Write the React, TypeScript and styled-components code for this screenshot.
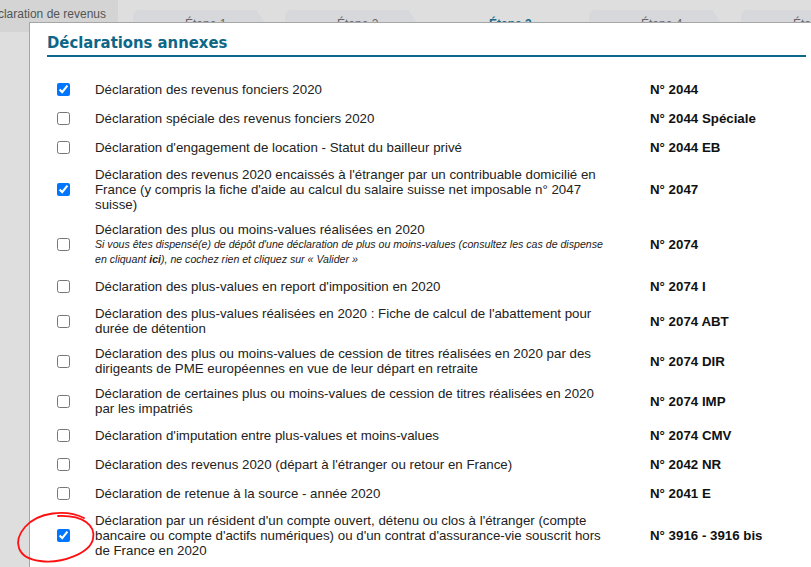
import React from "react";
import styled, { createGlobalStyle } from "styled-components";

const GlobalStyle = createGlobalStyle`
  html, body {
    margin: 0;
    padding: 0;
    background: #dedede;
  }
  body {
    font-family: "Liberation Sans", Arial, sans-serif;
  }
`;

const Page = styled.div`
  position: relative;
  width: 811px;
  height: 567px;
  overflow: hidden;
  background: #dedede;
`;

const TopBar = styled.div`
  display: flex;
  align-items: flex-start;
  height: 32px;
`;

const Crumb = styled.div`
  flex-shrink: 0;
  width: 106px;
  height: 28px;
  padding: 0 12px 4px 0;
  display: flex;
  justify-content: flex-end;
  align-items: center;
  overflow: hidden;
  white-space: nowrap;
  background: #d4d4d4;
  color: #555;
  font-size: 12px;
`;

const Tabs = styled.div`
  display: flex;
  flex-shrink: 0;
  gap: 12px;
  margin-left: 15px;
  padding-top: 10px;
`;

const Tab = styled.div<{ $active?: boolean }>`
  flex-shrink: 0;
  width: 140px;
  height: 26px;
  padding: 7px 0 0 52px;
  box-sizing: border-box;
  background: ${({ $active }) => ($active ? "#dedede" : "#d6d8db")};
  clip-path: polygon(0 0, 88% 0, 100% 100%, 0 100%);
  border-radius: 6px 0 0 0;
  color: ${({ $active }) => ($active ? "#1d6a8c" : "#666")};
  font-weight: ${({ $active }) => ($active ? "bold" : "normal")};
  font-size: 12px;
`;

const Modal = styled.div`
  position: absolute;
  left: 29px;
  top: 22px;
  width: 758px;
  height: 600px;
  padding: 0 18px;
  background: #fff;
  border: 1px solid #a6a6a6;
`;

const Title = styled.h2`
  margin: 10px 0 0 -1px;
  padding-bottom: 2px;
  border-bottom: 2px solid #0b6a8b;
  color: #0e6687;
  font-family: "DejaVu Sans Condensed", "Liberation Sans Narrow", sans-serif;
  font-size: 16.5px;
  line-height: 20px;
  font-weight: bold;
`;

const List = styled.div`
  margin-top: 18px;
`;

const Row = styled.label`
  display: grid;
  grid-template-columns: 47px 510px 1fr;
  align-items: center;
  padding: 5px 0;
  color: #222;
  font-size: 13.3px;
  line-height: 15px;
`;

const Box = styled.input`
  margin: 0 0 0 9px;
  width: 13px;
  height: 13px;
  accent-color: #0075ff;
`;

const Label = styled.div``;

const Note = styled.div`
  font-size: 10.6px;
  font-style: italic;
  line-height: 15px;
  b {
    font-weight: bold;
  }
`;

const Code = styled.div`
  padding-left: 45px;
  font-weight: bold;
  color: #111;
  line-height: 19px;
  white-space: nowrap;
`;

const Mark = styled.svg`
  position: absolute;
  left: 0;
  top: 500px;
  width: 110px;
  height: 67px;
  pointer-events: none;
`;

type Item = { checked: boolean; text: React.ReactNode; code: string; note?: React.ReactNode };

const items: Item[] = [
  { checked: true, text: "Déclaration des revenus fonciers 2020", code: "N° 2044" },
  { checked: false, text: "Déclaration spéciale des revenus fonciers 2020", code: "N° 2044 Spéciale" },
  { checked: false, text: "Déclaration d'engagement de location - Statut du bailleur privé", code: "N° 2044 EB" },
  {
    checked: true,
    text: "Déclaration des revenus 2020 encaissés à l'étranger par un contribuable domicilié en France (y compris la fiche d'aide au calcul du salaire suisse net imposable n° 2047 suisse)",
    code: "N° 2047",
  },
  {
    checked: false,
    text: "Déclaration des plus ou moins-values réalisées en 2020",
    note: (
      <>
        Si vous êtes dispensé(e) de dépôt d'une déclaration de plus ou moins-values (consultez les cas de dispense en
        cliquant <b>ici</b>), ne cochez rien et cliquez sur « Valider »
      </>
    ),
    code: "N° 2074",
  },
  { checked: false, text: "Déclaration des plus-values en report d'imposition en 2020", code: "N° 2074 I" },
  {
    checked: false,
    text: "Déclaration des plus-values réalisées en 2020 : Fiche de calcul de l'abattement pour durée de détention",
    code: "N° 2074 ABT",
  },
  {
    checked: false,
    text: "Déclaration des plus ou moins-values de cession de titres réalisées en 2020 par des dirigeants de PME européennes en vue de leur départ en retraite",
    code: "N° 2074 DIR",
  },
  {
    checked: false,
    text: "Déclaration de certaines plus ou moins-values de cession de titres réalisées en 2020 par les impatriés",
    code: "N° 2074 IMP",
  },
  { checked: false, text: "Déclaration d'imputation entre plus-values et moins-values", code: "N° 2074 CMV" },
  { checked: false, text: "Déclaration des revenus 2020 (départ à l'étranger ou retour en France)", code: "N° 2042 NR" },
  { checked: false, text: "Déclaration de retenue à la source - année 2020", code: "N° 2041 E" },
  {
    checked: true,
    text: "Déclaration par un résident d'un compte ouvert, détenu ou clos à l'étranger (compte bancaire ou compte d'actifs numériques) ou d'un contrat d'assurance-vie souscrit hors de France en 2020",
    code: "N° 3916 - 3916 bis",
  },
];

const steps = ["Étape 1", "Étape 2", "Étape 3", "Étape 4", "Étape 5"];

export default function App() {
  return (
    <Page>
      <GlobalStyle />
      <TopBar>
        <Crumb>Déclaration de revenus</Crumb>
        <Tabs>
          {steps.map((s, i) => (
            <Tab key={s} $active={i === 2}>
              {s}
            </Tab>
          ))}
        </Tabs>
      </TopBar>
      <Modal>
        <Title>Déclarations annexes</Title>
        <List>
          {items.map((it, i) => (
            <Row key={i}>
              <Box type="checkbox" defaultChecked={it.checked} />
              <Label>
                {it.text}
                {it.note && <Note>{it.note}</Note>}
              </Label>
              <Code>{it.code}</Code>
            </Row>
          ))}
        </List>
      </Modal>
      <Mark viewBox="0 500 110 67">
        <path
          d="M84 518 C66 509 38 512 25 527 C13 541 16 558 40 561 C62 564 90 553 93 539 C96 526 84 515 58 516"
          fill="none"
          stroke="#ff1010"
          strokeWidth="1.8"
          strokeLinecap="round"
        />
      </Mark>
    </Page>
  );
}
